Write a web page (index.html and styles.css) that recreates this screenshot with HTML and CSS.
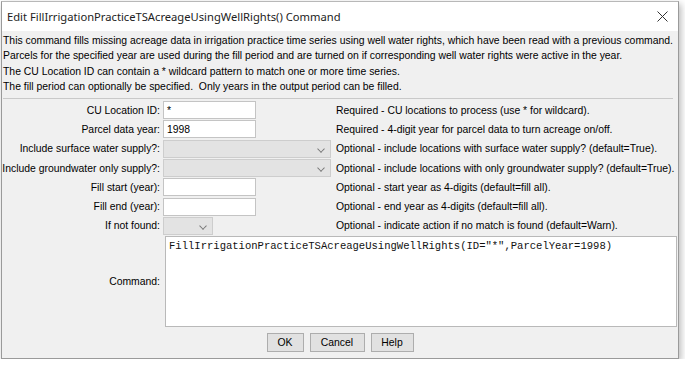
FILE: index.html
```html
<!DOCTYPE html>
<html lang="en">
<head>
    <meta charset="UTF-8">
    <title>Edit FillIrrigationPracticeTSAcreageUsingWellRights() Command</title>
    <link rel="stylesheet" href="styles.css">
</head>
<body>
    <div class="dialog">
        <div class="titlebar">
            <span class="title">Edit FillIrrigationPracticeTSAcreageUsingWellRights() Command</span>
            <svg class="close" width="11" height="11" viewBox="0 0 11 11">
                <path d="M0.5 0.5 L10.5 10.5 M10.5 0.5 L0.5 10.5" stroke="#333" stroke-width="1" fill="none"/>
            </svg>
        </div>

        <div class="body">
            <div class="intro">
                <p>This command fills missing acreage data in irrigation practice time series using well water rights, which have been read with a previous command.</p>
                <p>Parcels for the specified year are used during the fill period and are turned on if corresponding well water rights were active in the year.</p>
                <p>The CU Location ID can contain a * wildcard pattern to match one or more time series.</p>
                <p>The fill period can optionally be specified.&nbsp; Only years in the output period can be filled.</p>
            </div>

            <hr class="sep">

            <div class="form">
                <label>CU Location ID:</label>
                <div class="field text">*</div>
                <span class="desc">Required - CU locations to process (use * for wildcard).</span>

                <label>Parcel data year:</label>
                <div class="field text">1998</div>
                <span class="desc">Required - 4-digit year for parcel data to turn acreage on/off.</span>

                <label>Include surface water supply?:</label>
                <div class="field combo wide"><span class="arrow"></span></div>
                <span class="desc">Optional - include locations with surface water supply? (default=True).</span>

                <label>Include groundwater only supply?:</label>
                <div class="field combo wide"><span class="arrow"></span></div>
                <span class="desc">Optional - include locations with only groundwater supply? (default=True).</span>

                <label>Fill start (year):</label>
                <div class="field text"></div>
                <span class="desc">Optional - start year as 4-digits (default=fill all).</span>

                <label>Fill end (year):</label>
                <div class="field text"></div>
                <span class="desc">Optional - end year as 4-digits (default=fill all).</span>

                <label>If not found:</label>
                <div class="field combo small"><span class="arrow"></span></div>
                <span class="desc">Optional - indicate action if no match is found (default=Warn).</span>

                <label>Command:</label>
                <div class="command">FillIrrigationPracticeTSAcreageUsingWellRights(ID="*",ParcelYear=1998)</div>
            </div>

            <div class="buttons">
                <button class="ok">OK</button>
                <button class="cancel">Cancel</button>
                <button class="help">Help</button>
            </div>
        </div>
    </div>
</body>
</html>
```

FILE: styles.css
```css
* {
    margin: 0;
    padding: 0;
    box-sizing: border-box;
}

body {
    background-color: #fff;
    font-family: "Liberation Sans", Arial, sans-serif;
    font-size: 10.4px;
    color: #000;
}

.dialog {
    margin: 1px 0 0 1px;
    width: 678px;
    height: 358px;
    border: 1px solid #9a9a9a;
    border-top-color: #b8b8b8;
    background-color: #f0f0f0;
    box-shadow: 2px 3px 7px rgba(0, 0, 0, 0.28);
    display: flex;
    flex-direction: column;
}

.titlebar {
    flex-shrink: 0;
    height: 29px;
    background-color: #fff;
    padding: 0 10px 0 5px;
    display: flex;
    justify-content: space-between;
    align-items: center;
}

.title {
    font-family: "Noto Sans", sans-serif;
    font-size: 11.2px;
    color: #222;
}

.body {
    flex: 1;
    display: flex;
    flex-direction: column;
}

.intro {
    padding: 2px 0 0 1px;
    line-height: 15.3px;
    white-space: nowrap;
}

.sep {
    border: none;
    border-top: 1px solid #c9c9c9;
    margin: 4px 5px 0 1px;
}

.form {
    margin-top: 2px;
    display: grid;
    grid-template-columns: 161px 173px minmax(0, 1fr);
    grid-template-rows: repeat(7, 18px) 91px;
    row-gap: 1.3px;
}

.form label {
    text-align: right;
    padding-right: 3px;
    align-self: center;
    white-space: nowrap;
}

.desc {
    align-self: center;
    white-space: nowrap;
}

.field {
    height: 18px;
    border: 1px solid #c4c4c4;
}

.text {
    width: 93px;
    background-color: #fff;
    padding: 1px 0 0 3px;
    line-height: 15px;
}

.combo {
    background-color: #e3e3e3;
    border-color: #cdcdcd;
    position: relative;
}

.wide {
    width: 168px;
}

.small {
    width: 50px;
}

.arrow {
    position: absolute;
    right: 6px;
    top: 5px;
    width: 6px;
    height: 6px;
    border-right: 1px solid #777;
    border-bottom: 1px solid #777;
    transform: rotate(45deg) scale(0.9, 0.9);
}

.command {
    grid-column: 2 / 4;
    margin: 0 1px 0 2px;
    background-color: #fff;
    border: 1px solid #b9b9b9;
    font-family: "Liberation Mono", "Courier New", monospace;
    font-size: 10.55px;
    padding: 3px 0 0 3px;
    color: #111;
}

.buttons {
    margin-top: 5.5px;
    display: flex;
    justify-content: center;
    gap: 6px;
}

button {
    height: 19px;
    background-color: #e1e1e1;
    border: 1px solid #adadad;
    font-family: "Liberation Sans", Arial, sans-serif;
    font-size: 10.4px;
    color: #000;
}

.ok {
    width: 37px;
}

.cancel {
    width: 55px;
}

.help {
    width: 43px;
}
```
